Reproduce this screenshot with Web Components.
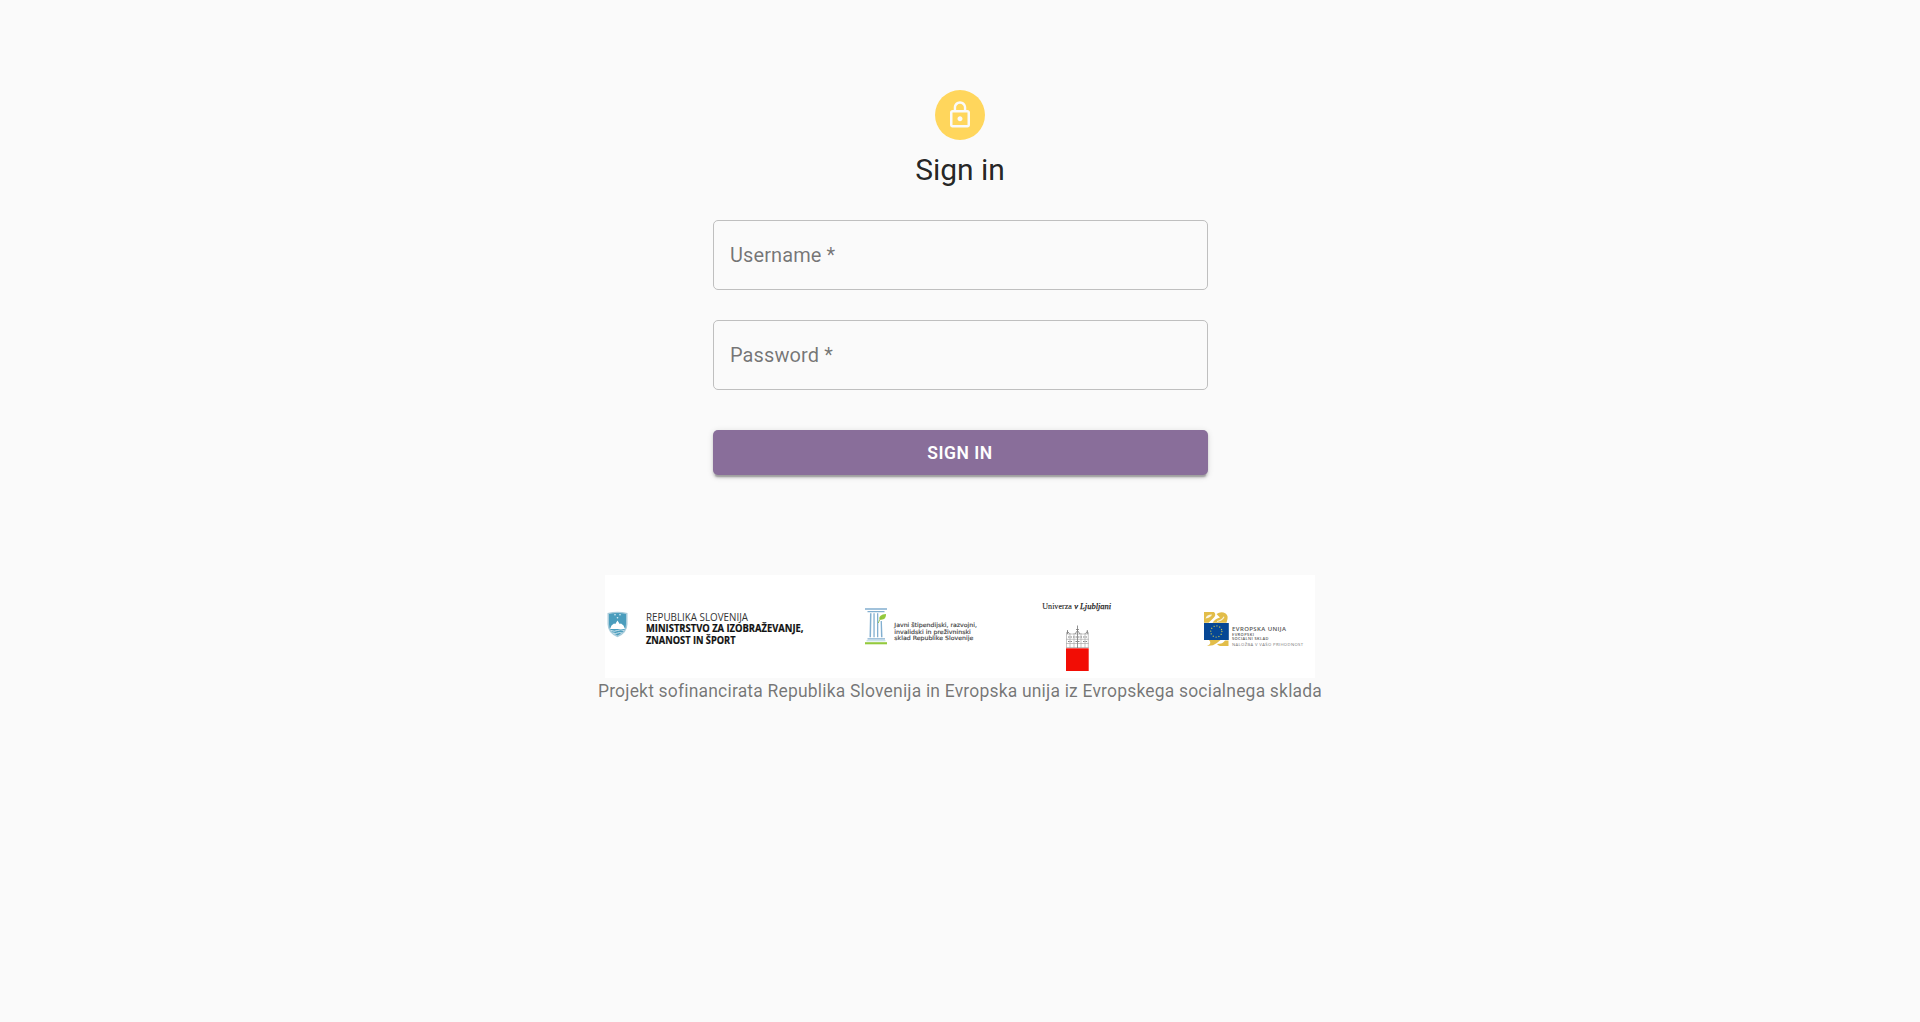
<!DOCTYPE html>
<html lang="en">
<head>
<meta charset="utf-8">
<title>Sign in</title>
<style>
body{margin:0;background:#fafafa;font-family:Roboto,sans-serif;color:rgba(0,0,0,.87)}
</style>
</head>
<body>
<login-page>
  <lock-avatar slot="head"></lock-avatar>
  <page-title slot="head">Sign in</page-title>
  <text-field slot="form">Username *</text-field>
  <text-field slot="form">Password *</text-field>
  <submit-button slot="form">Sign in</submit-button>
  <sponsor-banner slot="foot"></sponsor-banner>
  <fine-print slot="foot">Projekt sofinancirata Republika Slovenija in Evropska unija iz Evropskega socialnega sklada</fine-print>
</login-page>
<script>
const define = (name, html) => customElements.define(name, class extends HTMLElement {
  constructor() {
    super();
    this.attachShadow({mode: "open"}).innerHTML = html;
  }
});

define("login-page", `
<style>
:host{display:flex;flex-direction:column;align-items:center;padding-top:90px}
header,footer{display:flex;flex-direction:column;align-items:center}
header{gap:10px}
main{display:flex;flex-direction:column;gap:30px;width:495px;margin-top:30px}
footer{margin-top:100px}
</style>
<header><slot name="head"></slot></header>
<main><slot name="form"></slot></main>
<footer><slot name="foot"></slot></footer>`);

define("lock-avatar", `
<style>
:host{display:flex;align-items:center;justify-content:center;width:50px;height:50px;border-radius:50%;background:#ffd65c}
svg{width:30px;height:30px;fill:#fafafa}
</style>
<svg viewBox="0 0 24 24"><path d="M12 17c1.1 0 2-.9 2-2s-.9-2-2-2-2 .9-2 2 .9 2 2 2zm6-9h-1V6c0-2.76-2.24-5-5-5S7 3.24 7 6v2H6c-1.1 0-2 .9-2 2v10c0 1.1.9 2 2 2h12c1.1 0 2-.9 2-2V10c0-1.1-.9-2-2-2zM8.900 6c0-1.710 1.390-3.100 3.100-3.100s3.100 1.390 3.100 3.100v2H8.900V6zM18 20H6V10h12v10z"/></svg>`);

define("page-title", `
<style>
:host{display:block}
h1{margin:0;font-size:30px;font-weight:400;line-height:40px;letter-spacing:-.08px}
</style>
<h1><slot></slot></h1>`);

define("text-field", `
<style>
:host{display:flex;align-items:center;box-sizing:border-box;height:70px;padding:0 16.500px;border:1px solid #bfbfbf;border-radius:5px;color:rgba(0,0,0,.54);font-size:20px;line-height:20px;letter-spacing:.1px}
</style>
<label><slot></slot></label>`);

define("submit-button", `
<style>
:host{display:block;margin-top:10px}
button{display:block;width:100%;height:45px;border:0;border-radius:5px;padding:0;background:#896e9a;color:#fff;font:600 17.500px/30px Roboto,sans-serif;letter-spacing:.5px;text-transform:uppercase;box-shadow:0 3.750px 1.250px -2.500px rgba(0,0,0,.2),0 2.500px 2.500px rgba(0,0,0,.14),0 1.250px 6.250px rgba(0,0,0,.12)}
</style>
<button><slot></slot></button>`);

define("fine-print", `
<style>:host{display:block;padding-top:1px;font-size:17.500px;line-height:25px;letter-spacing:.185px;color:rgba(0,0,0,.54)}</style>
<slot></slot>`);

define("sponsor-banner", `
<style>
:host{display:flex;justify-content:center;width:710px;height:103px;background:#fff}
svg{width:710px;height:103px}
</style>
<svg viewBox="605 575 710 103">
  <g>
    <path d="M607.500 613Q617.500 610.500 627.500 613V624Q627.500 633 617.500 637.300Q607.500 633 607.500 624Z" fill="#a9ccdb"/>
    <path d="M609 614Q617.500 612 626 614V624Q626 631.500 617.500 635.500Q609 631.500 609 624Z" fill="#4a9dbd"/>
    <path d="M610 629L611.500 625.500L614 623.500L615.300 624L617.500 620.500L619.700 624L621 623.500L623.500 625.500L625 629Z" fill="#fff"/>
    <path d="M611 630.500q3.300 1.500 6.500 0t6.500 0M613 633q2.500 1 4.500 0t4.500 0" fill="none" stroke="#d9eaf1" stroke-width=".9"/>
    <g fill="#e4f2f7"><circle cx="615" cy="614.800" r=".8"/><circle cx="620" cy="614.800" r=".8"/><circle cx="617.500" cy="617.700" r=".8"/></g>
    <g font-family="Open Sans,sans-serif" font-size="10.800">
      <text x="646" y="620.500" fill="#333" textLength="102" lengthAdjust="spacingAndGlyphs">REPUBLIKA SLOVENIJA</text>
      <g font-weight="700" fill="#111" stroke="#111" stroke-width=".2">
        <text x="646" y="632.200" textLength="157.500" lengthAdjust="spacingAndGlyphs">MINISTRSTVO ZA IZOBRAŽEVANJE,</text>
        <text x="646" y="644.300" textLength="89.500" lengthAdjust="spacingAndGlyphs">ZNANOST IN ŠPORT</text>
      </g>
    </g>
  </g>
  <g>
    <g fill="#82afd0">
      <path d="M865 608.300h22v1.500h-22zM867.500 611h17v1.300h-17z"/>
      <path d="M870 613.300h1.500l-.5 24h-1.500zM873.400 613.300h1.300v24h-1.300zM877 613.300h1.300v24H877zM880.600 621h1.300l.6 16.300h-1.500zM867.500 638.300h17.500v1.200h-17.500z"/>
    </g>
    <path d="M865 642.200h22v2.100h-22z" fill="#93c93d"/>
    <path d="M866.500 640.300h19v1h-19z" fill="#b4d6df"/>
    <path d="M879.300 619.500Q878.500 614.500 886 614Q886.500 620.500 879.300 619.500Z" fill="#93c93d"/>
    <path d="M878.300 623Q879 619.500 882 617.500" fill="none" stroke="#83ba3d" stroke-width=".8"/>
    <g font-family="DejaVu Sans,sans-serif" font-size="5.800" fill="#444" stroke="#444" stroke-width=".15">
      <text x="894.300" y="627.200" textLength="82.700" lengthAdjust="spacingAndGlyphs">Javni štipendijski, razvojni,</text>
      <text x="894.300" y="633.600" textLength="76.500" lengthAdjust="spacingAndGlyphs">invalidski in preživninski</text>
      <text x="894.300" y="640.200" textLength="79" lengthAdjust="spacingAndGlyphs">sklad Republike Slovenije</text>
    </g>
  </g>
  <g>
    <g font-family="Liberation Serif,serif" font-size="8.200" fill="#222" stroke="#222">
      <text x="1042.300" y="608.800" stroke-width=".1" textLength="29.500" lengthAdjust="spacingAndGlyphs">Univerza</text>
      <text x="1074.200" y="608.800" stroke-width=".25" font-style="italic" textLength="37" lengthAdjust="spacingAndGlyphs">v Ljubljani</text>
    </g>
    <rect x="1066" y="648.300" width="22.700" height="22.700" fill="#f20d05"/>
    <path d="M1066.500 648V634H1088.300V648M1066 639.300H1088.700M1066 643.500H1088.700M1066 647.500H1088.700M1070 633V648M1074 633V648M1081 633V648M1085 633V648" fill="none" stroke="#aaa" stroke-width=".7"/>
    <path d="M1067.500 634V630M1087.300 634V630M1066.500 633.500L1067.500 631.500L1069.500 633.500M1085.500 633.500L1087.300 631.500L1088.500 633.500M1075 634L1077.500 630.500L1080 634M1077.500 625.500V648M1076 629.500H1079" fill="none" stroke="#777" stroke-width=".8"/>
    <path d="M1068 641.500H1072M1075.500 641.500H1079.500M1083 641.500H1087M1068 637H1087" fill="none" stroke="#777" stroke-width=".9" stroke-dasharray="1.500 1"/>
  </g>
  <g>
    <path d="M1204 612H1214Q1217 615 1213 618.500L1208.500 622.800H1204Z" fill="#e2bd49"/>
    <path d="M1205.500 618.500Q1206.500 614.500 1212 614.500Q1211 617.500 1205.500 618.500Z" fill="#fff" opacity=".85"/>
    <path d="M1216.500 614Q1220 611.500 1223.500 612.500Q1228.500 614 1227.500 619L1226.500 622.800H1212.500Q1215.500 618.500 1220 617.500Q1218 615.500 1216.500 614Z" fill="#e2bd49"/>
    <path d="M1217 621.500Q1222.500 620.500 1224 616.800" fill="none" stroke="#fff" stroke-width="1.100" opacity=".8"/>
    <path d="M1209 640H1220.500Q1217.500 643 1213 645.300L1207 646Q1212.500 643.500 1209 640ZM1228.500 640.500V646H1220Q1218 645.500 1217 644Q1223 644 1225 640.500Z" fill="#e2bd49"/>
    <rect x="1204" y="623" width="24.800" height="17" fill="#064795"/>
    <circle cx="1216.300" cy="631.500" r="5.600" fill="none" stroke="#c9c652" stroke-width="1.300" stroke-linecap="round" stroke-dasharray=".01 2.922"/>
    <g font-family="Open Sans,sans-serif" fill="#555">
      <text x="1232" y="630.700" font-size="6" font-weight="600" textLength="54">EVROPSKA UNIJA</text>
      <text x="1232" y="635.600" font-size="4" font-weight="600" textLength="22">EVROPSKI</text>
      <text x="1232" y="640.300" font-size="4" font-weight="600" textLength="36.500">SOCIALNI SKLAD</text>
      <text x="1232" y="646.200" font-size="4.200" fill="#777" textLength="71">NALOŽBA V VAŠO PRIHODNOST</text>
    </g>
  </g>
</svg>`);
</script>
</body>
</html>
